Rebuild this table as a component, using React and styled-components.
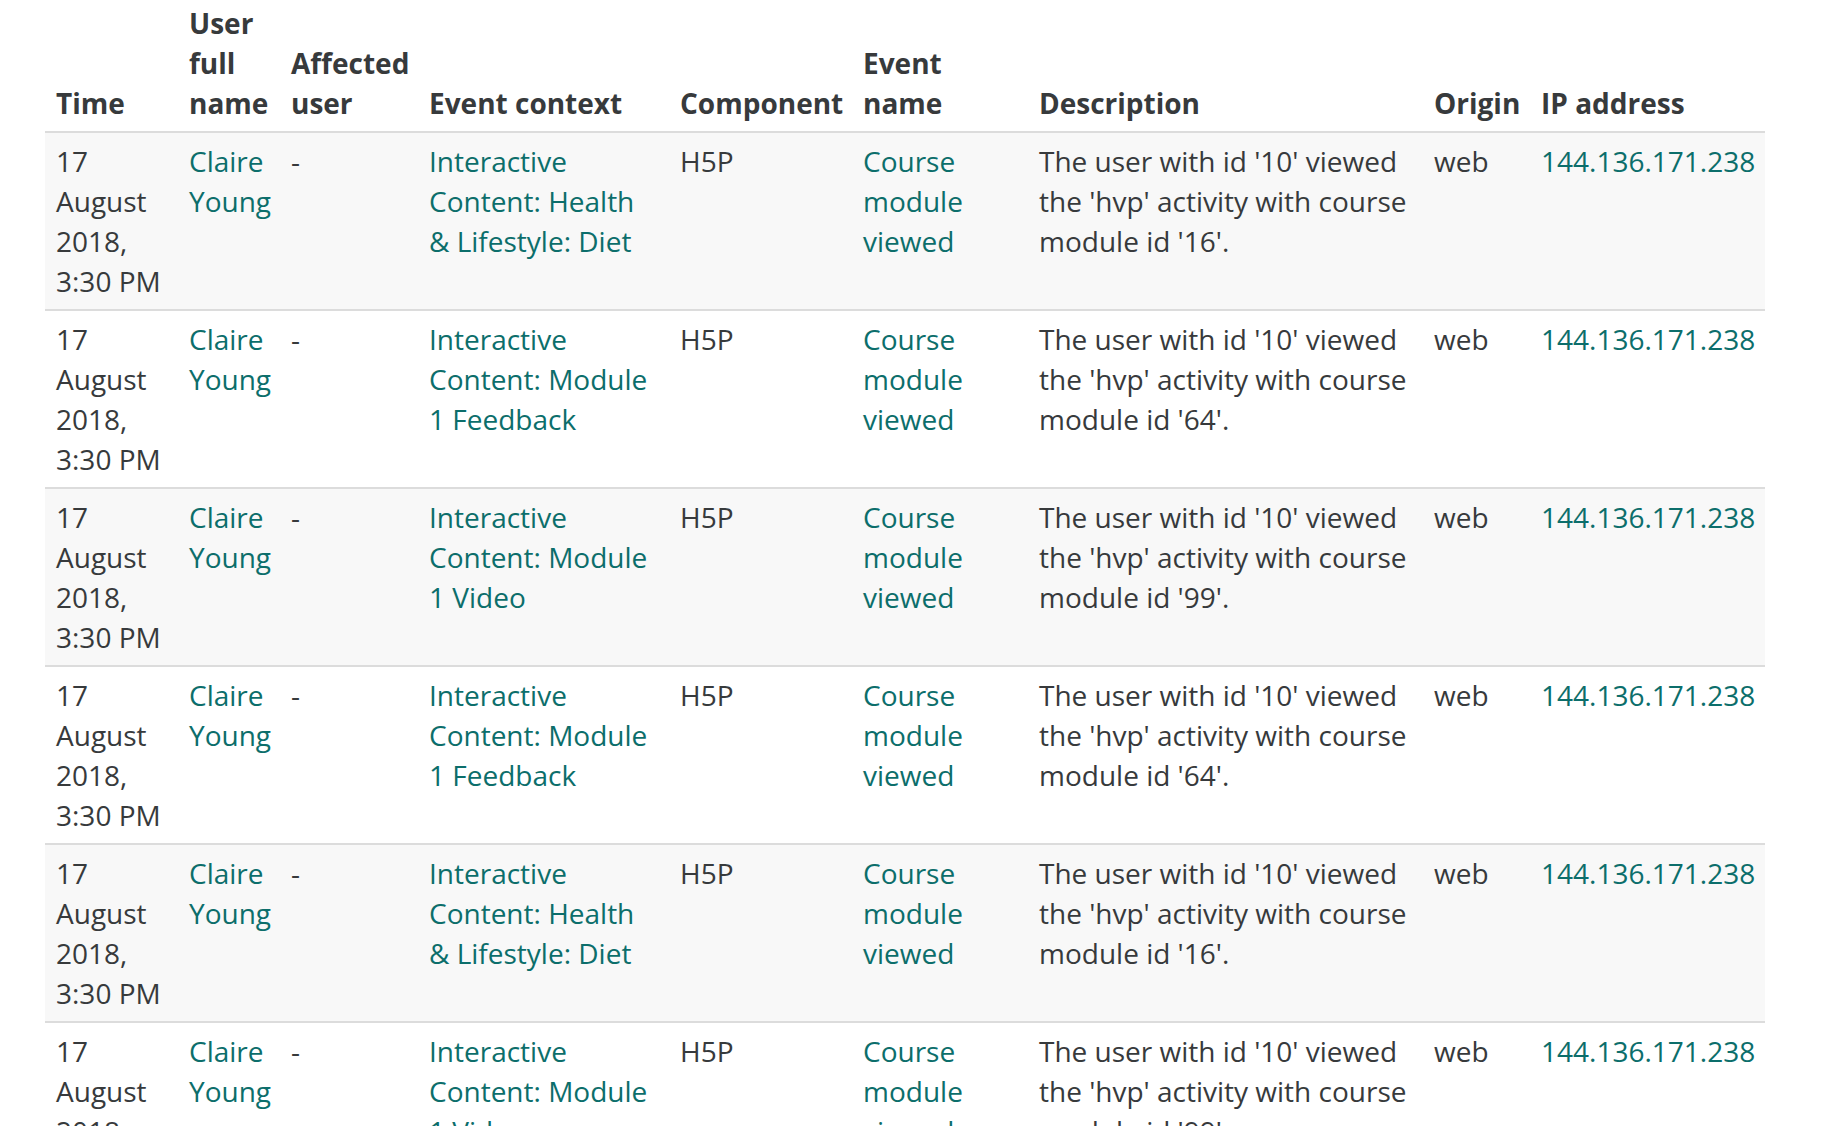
import styled, { createGlobalStyle } from "styled-components";

const GlobalStyle = createGlobalStyle`
  html, body {
    margin: 0;
    padding: 0;
    background: #ffffff;
  }

  body {
    font-family: "Open Sans", "Liberation Sans", sans-serif;
    color: #373a3c;
  }
`;

const columns = [
  { key: "time", label: "Time", width: 133 },
  { key: "user", label: "User full name", width: 102 },
  { key: "affected", label: "Affected user", width: 138 },
  { key: "context", label: "Event context", width: 251 },
  { key: "component", label: "Component", width: 183 },
  { key: "event", label: "Event name", width: 176 },
  { key: "description", label: "Description", width: 395 },
  { key: "origin", label: "Origin", width: 107 },
  { key: "ip", label: "IP address", width: 235 },
];

const entries = [
  { context: "Interactive Content: Health & Lifestyle: Diet", module: "16" },
  { context: "Interactive Content: Module 1 Feedback", module: "64" },
  { context: "Interactive Content: Module 1 Video", module: "99" },
  { context: "Interactive Content: Module 1 Feedback", module: "64" },
  { context: "Interactive Content: Health & Lifestyle: Diet", module: "16" },
  { context: "Interactive Content: Module 1 Video", module: "99" },
];

export default function App() {
  return (
    <>
      <GlobalStyle />
      <StPage>
        <StTable>
          <colgroup>
            {columns.map((col) => (
              <col key={col.key} style={{ width: col.width }} />
            ))}
          </colgroup>
          <thead>
            <tr>
              {columns.map((col) => (
                <StHeadCell key={col.key}>{col.label}</StHeadCell>
              ))}
            </tr>
          </thead>
          <tbody>
            {entries.map((entry, i) => (
              <StRow key={i} $striped={i % 2 === 0}>
                <StCell>17 August 2018, 3:30 PM</StCell>
                <StCell>
                  <StLink href="#">Claire Young</StLink>
                </StCell>
                <StCell>-</StCell>
                <StCell>
                  <StLink href="#">{entry.context}</StLink>
                </StCell>
                <StCell>H5P</StCell>
                <StCell>
                  <StLink href="#">Course module viewed</StLink>
                </StCell>
                <StCell>
                  The user with id '10' viewed the 'hvp' activity with course module id '{entry.module}'.
                </StCell>
                <StCell>web</StCell>
                <StCell>
                  <StLink href="#">144.136.171.238</StLink>
                </StCell>
              </StRow>
            ))}
          </tbody>
        </StTable>
      </StPage>
    </>
  );
}

const StPage = styled.div`
  padding: 0 69px 0 45px;
  height: 1126px;
  overflow: hidden;
`;

const StTable = styled.table`
  table-layout: fixed;
  border-collapse: collapse;

  width: 1720px;

  font-size: 28px;
  line-height: 40px;
`;

const StHeadCell = styled.th`
  padding: 3px 11px 8px;
  border-bottom: 2px solid #dcdcdc;

  text-align: left;
  vertical-align: bottom;
  font-weight: 700;
  color: #373a3c;
`;

const StRow = styled.tr`
  background: ${({ $striped }) => ($striped ? "#f8f8f8" : "#ffffff")};
  border-bottom: 2px solid #dcdcdc;
`;

const StCell = styled.td`
  padding: 8px 11px;

  vertical-align: top;
  text-align: left;
  overflow-wrap: normal;
  word-break: normal;
`;

const StLink = styled.a`
  color: #0c6e6b;
  text-decoration: none;
`;
